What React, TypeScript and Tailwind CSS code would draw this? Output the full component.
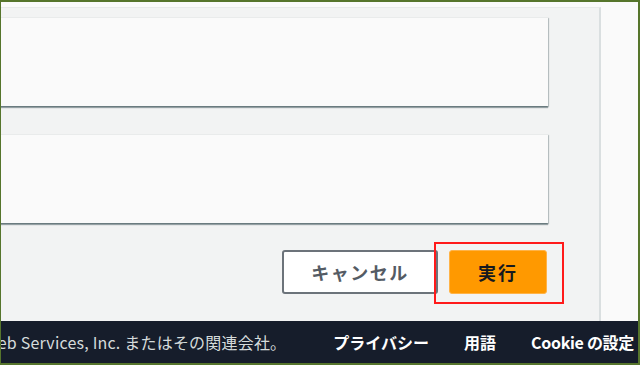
import React from "react";

const cardCls =
  "h-[89px] w-[561px] -ml-[14px] bg-[#fafafa] border-t border-[#e9ebeb] shadow-[0_2px_1px_0_rgba(0,28,36,0.35),1px_1px_1px_0_rgba(0,28,36,0.2),-1px_1px_1px_0_rgba(0,28,36,0.15)]";

export default function App() {
  return (
    <div
      className="relative w-[640px] h-[365px] overflow-hidden flex flex-col border-t-2 border-b-2 border-l border-r-2 border-[#56752c] bg-[#fafafa]"
      style={{ fontFamily: '"Noto Sans CJK JP", "Noto Sans", sans-serif' }}
    >
      <div className="h-[5px] shrink-0 bg-[#fafafa]" />
      <div className="flex flex-1 min-h-0">
        <div className="w-[600px] shrink-0 bg-[#f2f3f3] border-r-2 border-[#dadfe0] border-t border-t-[#e8eaea] pt-[9px] flex flex-col">
          <div className={cardCls} />
          <div className="h-[28px]" />
          <div className={cardCls} />
          <div className="w-[546px] flex justify-end gap-[11px] mt-[27px]">
            <button className="w-[156px] h-[44px] rounded-[3px] border-2 border-[#6c737a] bg-white text-[18px] font-bold tracking-[1.5px] text-[#545b64] flex items-center justify-center">
              キャンセル
            </button>
            <button className="w-[98px] h-[44px] rounded-[3px] border border-[#ffb347] bg-[#ff9900] text-[18px] font-bold tracking-[2px] text-[#16191f] flex items-center justify-center">
              実行
            </button>
          </div>
        </div>
        <div className="flex-1 bg-[#fafafa]" />
      </div>
      <footer className="h-[42px] shrink-0 bg-[#161d2b] flex items-center justify-end pr-[4px] whitespace-nowrap text-[16px] leading-none">
        <span className="text-[#d5dbdb] tracking-[0.2px]">
          © 2008 - 2021, Amazon Web Services, Inc. またはその関連会社。
        </span>
        <span className="ml-[47px] text-white font-bold">プライバシー</span>
        <span className="ml-[35px] text-white font-bold">用語</span>
        <span className="ml-[35px] text-white font-bold tracking-[-0.3px]">Cookie の設定</span>
      </footer>
      <div className="absolute left-[433px] top-[240px] w-[130px] h-[62px] border-2 border-[#ff1a1a]" />
    </div>
  );
}
